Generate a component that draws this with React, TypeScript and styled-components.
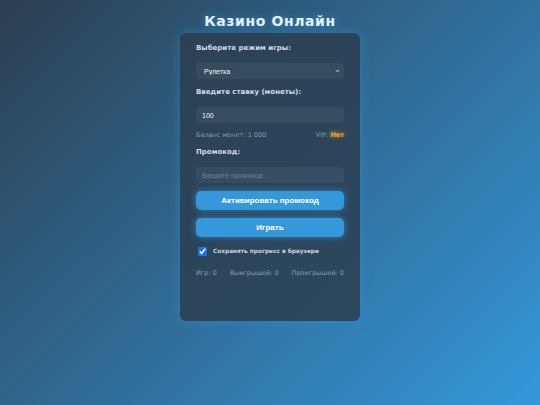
import { FC } from 'react';
import styled, { createGlobalStyle } from 'styled-components';

const GlobalStyle = createGlobalStyle`
  html, body {
    margin: 0;
    padding: 0;
  }
  body {
    font-family: 'DejaVu Sans', Verdana, sans-serif;
  }
`;

const Page = styled.div`
  min-height: 100vh;
  box-sizing: border-box;
  background: linear-gradient(135deg, #2c3e50, #3498db);
  display: flex;
  flex-direction: column;
  align-items: center;
`;

const Title = styled.h1`
  margin: 12px 0 3px;
  font-family: 'DejaVu Sans', Verdana, sans-serif;
  font-size: 14px;
  line-height: 18px;
  letter-spacing: 0.6px;
  color: #e6f2fb;
  text-shadow: 0 0 8px rgba(52, 152, 219, 0.8);
`;

const Card = styled.div`
  width: 180px;
  height: 288px;
  box-sizing: border-box;
  padding: 11px 16px 16px;
  background: rgba(44, 62, 80, 0.85);
  border-radius: 6px;
  box-shadow: 0 0 12px rgba(52, 152, 219, 0.45);
  display: flex;
  flex-direction: column;
`;

const Label = styled.label`
  display: block;
  font-size: 7px;
  line-height: 9px;
  font-weight: bold;
  color: #d3dbe3;
  margin-bottom: 10px;
`;

const fieldCss = `
  display: block;
  width: 100%;
  height: 16px;
  box-sizing: border-box;
  border: none;
  border-radius: 4px;
  background: rgba(255, 255, 255, 0.05);
  color: #f2f5f8;
  font-family: 'Liberation Sans', Arial, sans-serif;
  font-size: 7px;
  padding: 0 6px;
  margin: 0;
  outline: none;
`;

const SelectWrap = styled.div`
  position: relative;
  margin-bottom: 9px;
`;

const Select = styled.select`
  ${fieldCss}
  appearance: none;
  padding-left: 8px;
`;

const Chevron = styled.svg`
  position: absolute;
  right: 4px;
  top: 6px;
  width: 5px;
  height: 4px;
  pointer-events: none;
`;

const Input = styled.input<{ $gap?: number }>`
  ${fieldCss}
  margin-bottom: ${({ $gap }) => $gap ?? 9}px;
  &::placeholder {
    color: #6b8094;
  }
`;

const InfoRow = styled.div`
  display: flex;
  justify-content: space-between;
  font-size: 6.5px;
  line-height: 9px;
  color: #8a9bad;
  margin-bottom: 8px;
`;

const Vip = styled.b`
  color: #f5a623;
  text-shadow: 0 0 4px rgba(245, 166, 35, 0.9);
`;

const Button = styled.button`
  display: block;
  width: 100%;
  height: 19px;
  border: none;
  border-radius: 5px;
  background: #3498db;
  color: #fff;
  font-family: 'Liberation Sans', Arial, sans-serif;
  font-weight: bold;
  font-size: 8px;
  box-shadow: 0 0 7px rgba(52, 152, 219, 0.7);
  margin: 0 0 8.5px;
  cursor: pointer;
`;

const CheckRow = styled.label`
  display: flex;
  align-items: center;
  gap: 6px;
  margin: 1px 0 13px 2px;
  font-size: 5.8px;
  font-weight: bold;
  color: #c9d2db;
  line-height: 9px;

  input {
    margin: 0;
    width: 9px;
    height: 9px;
    accent-color: #1a73e8;
  }
`;

const Stats = styled.div`
  display: flex;
  justify-content: space-between;
  font-size: 6.5px;
  line-height: 9px;
  color: #8a9bad;
`;

const App: FC = () => {
  return (
    <Page>
      <GlobalStyle />
      <Title>Казино Онлайн</Title>
      <Card>
        <Label>Выберите режим игры:</Label>
        <SelectWrap>
          <Select defaultValue="roulette">
            <option value="roulette">Рулетка</option>
            <option value="slots">Слоты</option>
          </Select>
          <Chevron viewBox="0 0 10 8">
            <path d="M1.5 2 L5 5.5 L8.5 2" stroke="#e0e6ec" strokeWidth="2" fill="none" />
          </Chevron>
        </SelectWrap>

        <Label>Введите ставку (монеты):</Label>
        <Input type="number" defaultValue={100} $gap={8} />

        <InfoRow>
          <span>Баланс монет: 1 000</span>
          <span>
            VIP: <Vip>Нет</Vip>
          </span>
        </InfoRow>

        <Label>Промокод:</Label>
        <Input placeholder="Введите промокод" $gap={7.5} />

        <Button>Активировать промокод</Button>
        <Button>Играть</Button>

        <CheckRow>
          <input type="checkbox" defaultChecked />
          Сохранять прогресс в браузере
        </CheckRow>

        <Stats>
          <span>Игр: 0</span>
          <span>Выигрышей: 0</span>
          <span>Проигрышей: 0</span>
        </Stats>
      </Card>
    </Page>
  );
};

export default App;
